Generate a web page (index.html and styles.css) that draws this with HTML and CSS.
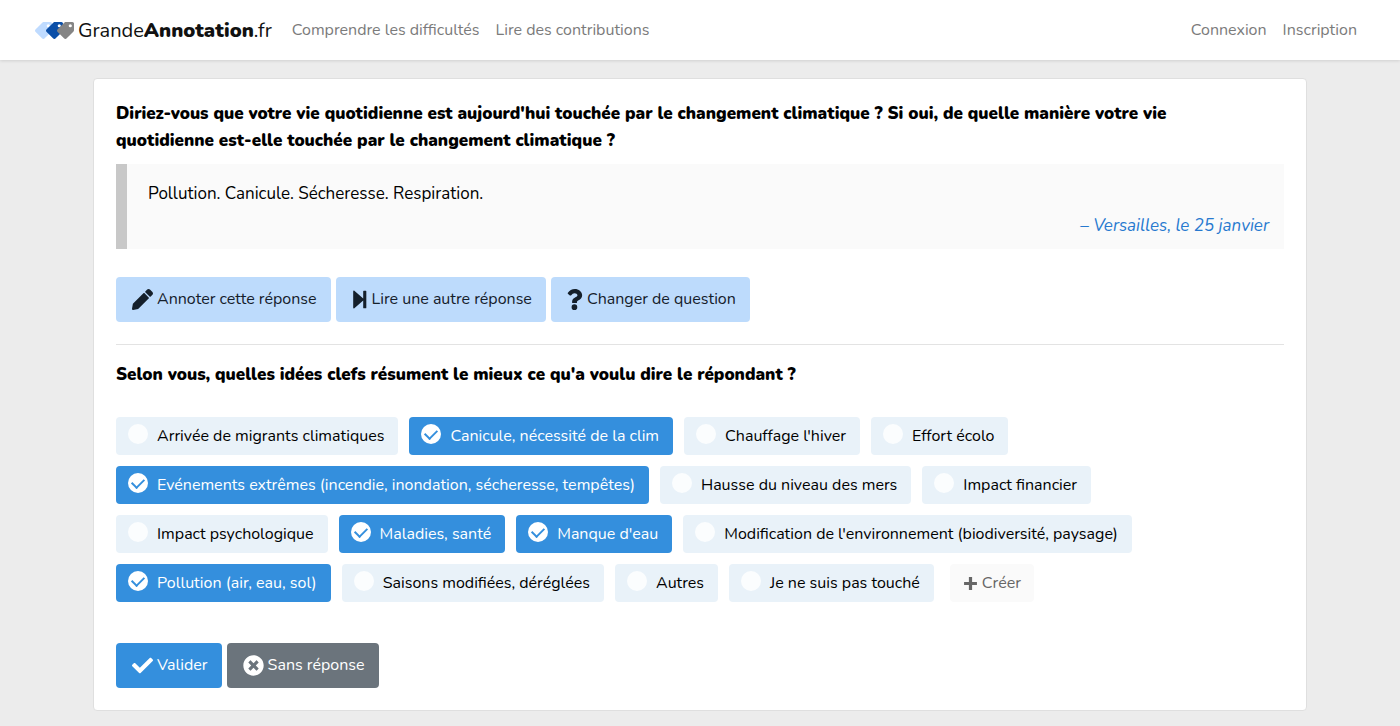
FILE: index.html
```html
<!DOCTYPE html>
<html lang="fr">
<head>
<meta charset="utf-8">
<meta name="viewport" content="width=device-width, initial-scale=1">
<title>GrandeAnnotation.fr</title>
<link rel="stylesheet" href="styles.css">
</head>
<body>
<header class="navbar">
  <a class="brand" href="#">
    <svg class="logo" viewBox="0 0 39 17" aria-hidden="true">
      <defs>
        <symbol id="tag" viewBox="0 0 512 512"><path fill-rule="evenodd" d="M512 252V48c0-26-22-48-48-48H260c-13 0-25 5-34 14L14 226c-19 19-19 49 0 68l204 204c19 19 49 19 68 0l212-212c9-9 14-21 14-34zM400 64a48 48 0 1 1 0 96 48 48 0 0 1 0-96z"/></symbol>
      </defs>
      <use href="#tag" class="tag-light" x="0" y="0" width="17" height="17"/>
      <use href="#tag" class="tag-blue" x="11" y="0" width="17" height="17"/>
      <use href="#tag" class="tag-grey" x="22" y="0" width="17" height="17"/>
    </svg>
    <span>Grande<b>Annotation</b>.fr</span>
  </a>
  <nav class="nav nav-main">
    <a href="#">Comprendre les difficultés</a>
    <a href="#">Lire des contributions</a>
  </nav>
  <nav class="nav">
    <a href="#">Connexion</a>
    <a href="#">Inscription</a>
  </nav>
</header>
<main class="card">
  <h1 class="question">Diriez-vous que votre vie quotidienne est aujourd'hui touchée par le changement climatique ? Si oui, de quelle manière votre vie quotidienne est-elle touchée par le changement climatique ?</h1>
  <blockquote class="answer">
    <p>Pollution. Canicule. Sécheresse. Respiration.</p>
    <footer>– Versailles, le 25 janvier</footer>
  </blockquote>
  <div class="actions">
    <button class="btn btn-light" type="button"><svg class="icon" viewBox="0 0 512 512" aria-hidden="true"><path d="M497.900 142.100l-46.100 46.100c-4.700 4.700-12.300 4.700-17 0l-111-111c-4.700-4.700-4.700-12.300 0-17l46.100-46.100c18.700-18.700 49.100-18.700 67.900 0l60.100 60.100c18.800 18.700 18.800 49.100 0 67.900zM284.200 99.800L21.600 362.400.4 483.900c-2.900 16.400 11.400 30.600 27.800 27.800l121.500-21.300 262.600-262.600c4.700-4.700 4.700-12.300 0-17l-111-111c-4.800-4.700-12.400-4.700-17.100 0z"/></svg>Annoter cette réponse</button>
    <button class="btn btn-light" type="button"><svg class="icon icon-narrow" viewBox="86 0 344 512" aria-hidden="true"><path d="M92 54v404c0 16 16 22 28 13l216-190v175c0 8 6 14 14 14h48c8 0 14-6 14-14V56c0-8-6-14-14-14h-48c-8 0-14 6-14 14v175L120 41c-12-9-28-3-28 13z"/></svg>Lire une autre réponse</button>
    <button class="btn btn-light" type="button"><svg class="icon icon-narrow" viewBox="18 0 370 512" aria-hidden="true"><path d="M202 0C122 0 70.500 32.700 29.900 91c-7.400 10.600-5.100 25.100 5.200 32.900l43.100 32.700c10.400 7.900 25.100 6 33.300-4.100 25-31.400 43.600-49.500 82.700-49.500 30.800 0 68.800 19.800 68.800 49.600 0 22.600-18.600 34.200-49 51.200-35.400 19.900-82.300 44.600-82.300 106.400V320c0 13.300 10.700 24 24 24h72.500c13.300 0 24-10.700 24-24v-5.800c0-42.900 125.300-44.600 125.300-160.600C377.500 66.300 286.900 0 202 0zM192 373.500a69.300 69.300 0 1 0 0 138.500 69.300 69.300 0 0 0 0-138.500z"/></svg>Changer de question</button>
  </div>
  <hr class="rule">
  <form>
    <fieldset class="ideas">
      <legend class="question">Selon vous, quelles idées clefs résument le mieux ce qu'a voulu dire le répondant ?</legend>
      <div class="chips">
        <label class="chip"><input type="checkbox">Arrivée de migrants climatiques</label>
        <label class="chip"><input type="checkbox" checked>Canicule, nécessité de la clim</label>
        <label class="chip"><input type="checkbox">Chauffage l'hiver</label>
        <label class="chip"><input type="checkbox">Effort écolo</label>
        <label class="chip"><input type="checkbox" checked>Evénements extrêmes (incendie, inondation, sécheresse, tempêtes)</label>
        <label class="chip"><input type="checkbox">Hausse du niveau des mers</label>
        <label class="chip"><input type="checkbox">Impact financier</label>
        <label class="chip"><input type="checkbox">Impact psychologique</label>
        <label class="chip"><input type="checkbox" checked>Maladies, santé</label>
        <label class="chip"><input type="checkbox" checked>Manque d'eau</label>
        <label class="chip"><input type="checkbox">Modification de l'environnement (biodiversité, paysage)</label>
        <label class="chip"><input type="checkbox" checked>Pollution (air, eau, sol)</label>
        <label class="chip"><input type="checkbox">Saisons modifiées, déréglées</label>
        <label class="chip"><input type="checkbox">Autres</label>
        <label class="chip"><input type="checkbox">Je ne suis pas touché</label>
        <button class="create" type="button"><svg viewBox="0 0 14 14" aria-hidden="true"><path d="M7 1v12M1 7h12"/></svg>Créer</button>
      </div>
    </fieldset>
    <div class="actions">
      <button class="btn btn-primary" type="submit"><svg class="icon" viewBox="0 0 512 512" aria-hidden="true"><path d="M173.900 439.400l-166.400-166.400c-10-10-10-26.200 0-36.200l36.200-36.200c10-10 26.200-10 36.200 0L192 312.700 432.100 72.600c10-10 26.200-10 36.200 0l36.200 36.200c10 10 10 26.200 0 36.200l-294.400 294.400c-10 10-26.200 10-36.200 0z"/></svg>Valider</button>
      <button class="btn btn-secondary" type="button"><svg class="icon" viewBox="0 0 512 512" aria-hidden="true"><path d="M256 8C119 8 8 119 8 256s111 248 248 248 248-111 248-248S393 8 256 8zm121.600 313.100c4.700 4.700 4.700 12.300 0 17L338 377.600c-4.700 4.700-12.300 4.700-17 0L256 312l-65.100 65.600c-4.700 4.700-12.300 4.700-17 0L134.400 338c-4.700-4.700-4.700-12.300 0-17l65.600-65-65.600-65.100c-4.700-4.700-4.700-12.300 0-17l39.600-39.600c4.700-4.700 12.300-4.700 17 0l65 65.700 65.100-65.600c4.700-4.700 12.300-4.700 17 0l39.600 39.600c4.700 4.700 4.700 12.300 0 17L312 256l65.600 65.100z"/></svg>Sans réponse</button>
    </div>
  </form>
</main>
</body>
</html>
```

FILE: styles.css
```css
* {
  box-sizing: border-box;
}

body {
  margin: 0;
  background: #ececec;
  color: #000;
  font-family: Nunito, Lato, sans-serif;
  font-size: 16px;
  line-height: 27px;
}

button {
  font: inherit;
  cursor: pointer;
}

.navbar {
  display: flex;
  align-items: center;
  min-height: 60px;
  padding: 0 43px 0 35px;
  background: #fff;
  box-shadow: 0 1px 3px rgba(0, 0, 0, 0.12);
}

.brand {
  display: flex;
  align-items: center;
  gap: 4px;
  color: #111;
  font-size: 20px;
  text-decoration: none;
}

.brand b {
  font-weight: 900;
}

.logo {
  width: 39px;
  height: 17px;
}

.tag-light {
  fill: #bfdbff;
}

.tag-blue {
  fill: #0b4fa8;
}

.tag-grey {
  fill: #858585;
}

.nav {
  display: flex;
  gap: 16px;
}

.nav-main {
  flex: 1;
  margin-left: 20px;
}

.nav a {
  color: #7b7b7b;
  text-decoration: none;
}

.card {
  max-width: 1214px;
  margin: 18px auto 16px;
  padding: 21px 22px 22px;
  background: #fff;
  border: 1px solid #dfdfdf;
  border-radius: 4px;
}

.question {
  margin: 0;
  padding: 0 22px 0 0;
  font-size: 17px;
  font-weight: 1000;
  line-height: 27px;
}

.answer {
  margin: 10px 0 28px;
  padding: 16px 15px 10px 21px;
  background: #fafafa;
  border-left: 11px solid #c8c8c8;
  font-size: 17px;
}

.answer p {
  margin: 0 0 5px;
}

.answer footer {
  color: #2779cf;
  font-style: italic;
  text-align: right;
}

.actions {
  display: flex;
  flex-wrap: wrap;
  gap: 5px;
}

.btn {
  display: flex;
  align-items: center;
  gap: 4px;
  height: 45px;
  padding: 0 14px 0 16px;
  border: 0;
  border-radius: 4px;
}

.icon {
  width: 21px;
  height: 21px;
  fill: currentColor;
}

.icon-narrow {
  width: 16px;
}

.btn-light {
  background: #bddbfc;
  color: #15202b;
}

.btn-primary {
  background: #348fdd;
  color: #fff;
}

.btn-secondary {
  background: #6b747c;
  color: #fff;
}

.rule {
  height: 1px;
  margin: 22px 0 16px;
  border: 0;
  background: #e3e3e3;
}

.ideas {
  margin: 0 0 39px;
  padding: 0;
  border: 0;
}

.chips {
  display: flex;
  flex-wrap: wrap;
  gap: 11px;
  margin-top: 29px;
}

.chip {
  display: flex;
  align-items: center;
  gap: 9px;
  min-height: 38px;
  padding: 0 14px 0 12px;
  border-radius: 4px;
  background: #e9f2f9;
}

.chip input {
  width: 20px;
  height: 20px;
  margin: 0 0 4px;
  appearance: none;
  border-radius: 50%;
  background: #fbfdfe;
}

.chip:has(:checked) {
  background: #348fdd;
  color: #fff;
}

.chip input:checked {
  display: grid;
  place-items: center;
  background: #fff;
}

.chip input:checked::after {
  content: "";
  width: 10px;
  height: 6px;
  margin-bottom: 3px;
  border: solid #348fdd;
  border-width: 0 0 2px 2px;
  transform: rotate(-45deg);
}

.create {
  display: flex;
  align-items: center;
  gap: 4px;
  margin-left: 5px;
  padding: 0 13px;
  border: 0;
  border-radius: 4px;
  background: #fafafa;
  color: #666;
}

.create svg {
  width: 15px;
  height: 15px;
  fill: none;
  stroke: currentColor;
  stroke-width: 3;
}

.ideas + .actions {
  padding-top: 2px;
}
```
